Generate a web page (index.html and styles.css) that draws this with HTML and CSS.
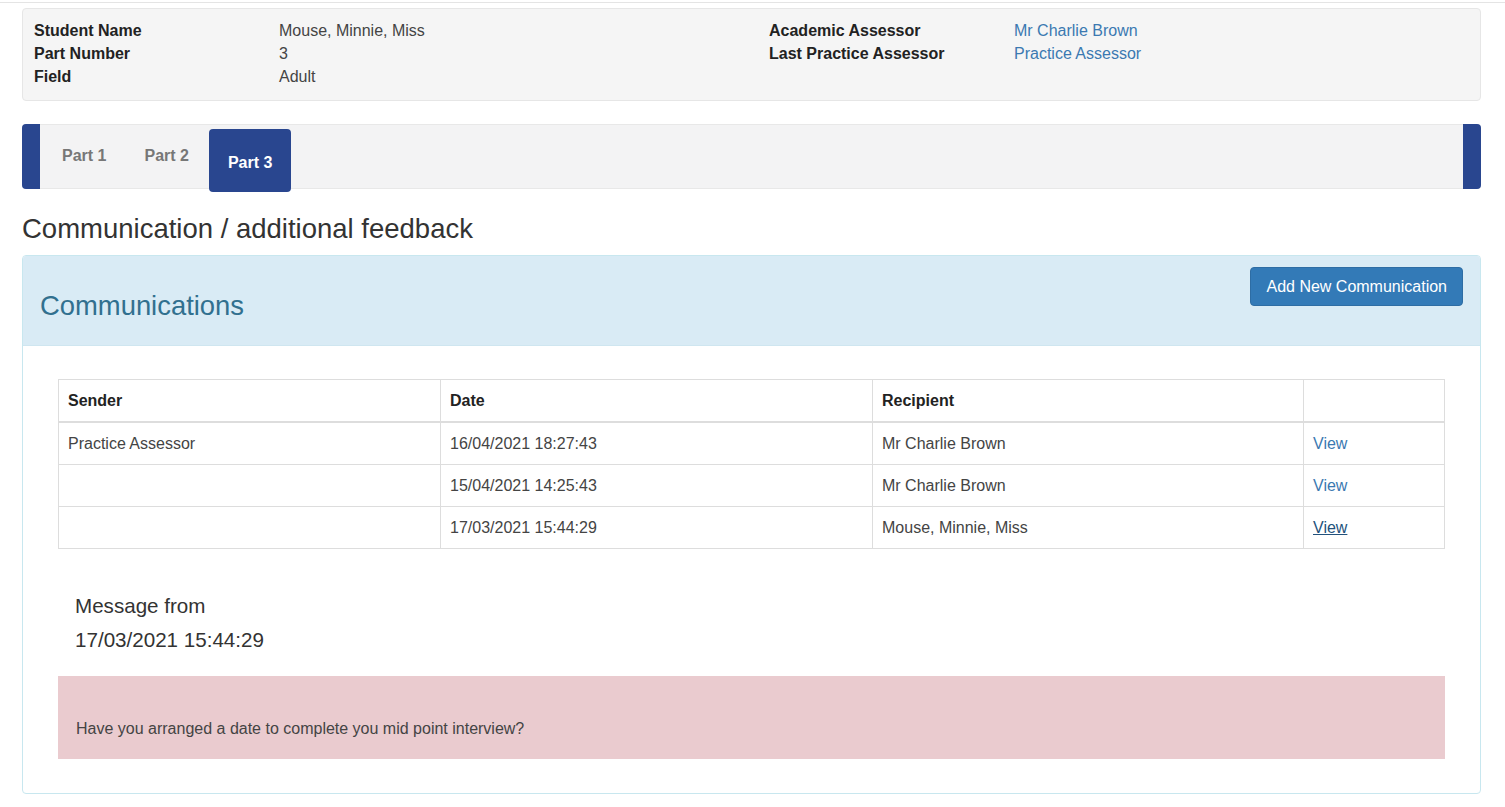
FILE: index.html
```html
<!DOCTYPE html>
<html>
<head>
<meta charset="utf-8">
<title>Communication</title>
<link rel="stylesheet" href="styles.css">
</head>
<body>
<div class="topline"></div>
<div class="page">
  <div class="well">
    <dl class="info">
      <dt>Student Name</dt><dd>Mouse, Minnie, Miss</dd>
      <dt>Part Number</dt><dd>3</dd>
      <dt>Field</dt><dd>Adult</dd>
    </dl>
    <dl class="info">
      <dt>Academic Assessor</dt><dd><a href="#">Mr Charlie Brown</a></dd>
      <dt>Last Practice Assessor</dt><dd><a href="#">Practice Assessor</a></dd>
    </dl>
  </div>

  <nav class="tabbar">
    <div class="tab-edge left"></div>
    <a class="tab" href="#">Part 1</a>
    <a class="tab" href="#">Part 2</a>
    <a class="tab active" href="#">Part 3</a>
    <div class="tab-spacer"></div>
    <div class="tab-edge right"></div>
  </nav>

  <h3 class="page-title">Communication / additional feedback</h3>

  <section class="panel">
    <div class="panel-heading">
      <h3 class="panel-title">Communications</h3>
      <a class="btn" href="#">Add New Communication</a>
    </div>
    <div class="panel-body">
      <table class="comm-table">
        <colgroup>
          <col class="c1"><col class="c2"><col class="c3"><col class="c4">
        </colgroup>
        <thead>
          <tr><th>Sender</th><th>Date</th><th>Recipient</th><th></th></tr>
        </thead>
        <tbody>
          <tr><td>Practice Assessor</td><td>16/04/2021 18:27:43</td><td>Mr Charlie Brown</td><td><a href="#">View</a></td></tr>
          <tr><td></td><td>15/04/2021 14:25:43</td><td>Mr Charlie Brown</td><td><a href="#">View</a></td></tr>
          <tr><td></td><td>17/03/2021 15:44:29</td><td>Mouse, Minnie, Miss</td><td><a class="visited" href="#">View</a></td></tr>
        </tbody>
      </table>

      <h4 class="msg-head">Message from<br>17/03/2021 15:44:29</h4>

      <div class="msg-box">
        <p>Have you arranged a date to complete you mid point interview?</p>
      </div>
    </div>
  </section>
</div>
</body>
</html>
```

FILE: styles.css
```css
* { box-sizing: border-box; }

body {
  margin: 0;
  font-family: "Liberation Sans", Arial, Helvetica, sans-serif;
  font-size: 16px;
  line-height: 23px;
  color: #333;
  background: #fff;
}

a { color: #3b79b1; text-decoration: none; }

.topline {
  height: 3px;
  border-bottom: 1px solid #e4e4e4;
}

.page {
  margin: 0 24px 0 22px;
}

.well {
  margin-top: 5px;
  background: #f5f5f5;
  border: 1px solid #e6e6e6;
  border-radius: 4px;
  padding: 10px 11px 12px;
  display: grid;
  grid-template-columns: 735px 1fr;
  min-height: 92px;
}

.info {
  margin: 0;
  display: grid;
  grid-template-columns: 245px 1fr;
  align-content: start;
}

.info dt { font-weight: bold; color: #222; }
.info dd { margin: 0; color: #444; }

.tabbar {
  margin-top: 23px;
  height: 65px;
  display: flex;
  background: #f3f3f4;
  border: 1px solid #e8e8e8;
  border-radius: 4px;
}

.tab-edge {
  width: 18px;
  background: #29468f;
  margin: -1px 0;
}
.tab-edge.left { border-radius: 4px 0 0 4px; margin-left: -1px; }
.tab-edge.right { border-radius: 0 4px 4px 0; width: 18px; margin-right: -1px; }

.tab {
  display: flex;
  align-items: center;
  padding: 0 19px;
  font-weight: bold;
  color: #777;
  margin-top: -3px;
}
.tab:first-of-type { margin-left: 3px; }

.tab.active {
  align-self: flex-start;
  height: 63px;
  margin-top: 4px;
  margin-left: 1px;
  padding: 4px 19px 0;
  background: #29468f;
  color: #fff;
  border-radius: 4px;
}

.tab-spacer { flex: 1; }

.page-title {
  margin: 24px 0 11px;
  font-size: 27.5px;
  line-height: 31px;
  font-weight: normal;
  color: #333;
}

.panel {
  border: 1px solid #c8e7ef;
  border-radius: 4px;
  margin-bottom: 12px;
}

.panel-heading {
  background: #d9ebf5;
  border-bottom: 1px solid #cfe6f0;
  display: flex;
  justify-content: space-between;
  align-items: flex-start;
  padding: 11px 17px 24px 17px;
  border-radius: 3px 3px 0 0;
}

.panel-title {
  margin: 23px 0 0;
  font-size: 27.4px;
  line-height: 31px;
  font-weight: normal;
  color: #31708f;
}

.btn {
  display: block;
  background: #337ab7;
  color: #fff;
  border: 1px solid #2e6da4;
  border-radius: 4px;
  padding: 7px 15px;
  font-size: 16px;
  line-height: 23px;
}

.panel-body {
  padding: 33px 35px 34px;
}

.comm-table {
  width: 100%;
  border-collapse: collapse;
  border: 1px solid #dddddd;
}
.comm-table col.c1 { width: 382px; }
.comm-table col.c2 { width: 432px; }
.comm-table col.c3 { width: 431px; }

.comm-table th,
.comm-table td {
  border: 1px solid #dddddd;
  padding: 9px 9px 9px 9px;
  text-align: left;
  vertical-align: top;
  height: 42px;
  color: #333;
}
.comm-table th {
  font-weight: bold;
  color: #222;
  border-bottom: 2px solid #dddddd;
  height: 42px;
}
.comm-table td { color: #444; }
.comm-table a { color: #3b79b1; }
.comm-table a.visited { color: #23527c; text-decoration: underline; }

.msg-head {
  margin: 40px 0 19px 17px;
  font-size: 20.6px;
  line-height: 34px;
  font-weight: normal;
  color: #333;
}

.msg-box {
  background: #eacbcf;
  padding: 41px 18px 19px;
}
.msg-box p {
  margin: 0;
  color: #444;
}
```
